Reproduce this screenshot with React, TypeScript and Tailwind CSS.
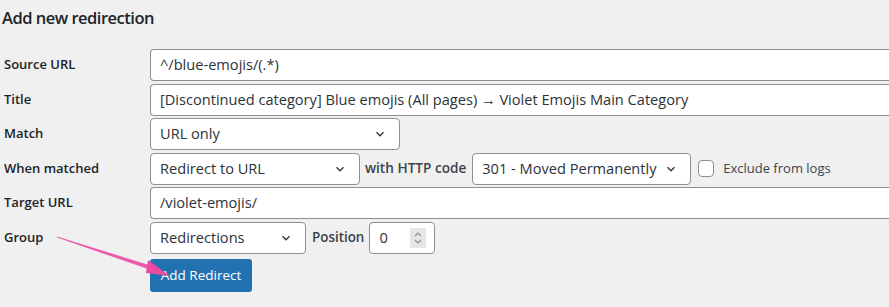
import React from "react";

const font = { fontFamily: '"Open Sans", "Noto Sans", Arial, sans-serif' };

function Chevron() {
  return (
    <svg width="14" height="14" viewBox="0 0 20 20" className="shrink-0">
      <path d="M5 7.5l5 5 5-5" fill="none" stroke="#2c3338" strokeWidth="1.8" />
    </svg>
  );
}

function Select({ value, width }: { value: string; width: string }) {
  return (
    <div
      className={`${width} h-[32px] bg-white border border-[#8c8f94] rounded-[4px] flex items-center justify-between pl-[9px] pr-[12px] text-[14.6px] text-[#2c3338]`}
    >
      <span>{value}</span>
      <Chevron />
    </div>
  );
}

function TextInput({ value }: { value: string }) {
  return (
    <div className="flex-1 h-[32px] bg-white border border-[#8c8f94] border-r-0 rounded-l-[4px] flex items-center pl-[9px] text-[14.6px] text-[#2c3338] whitespace-nowrap">
      {value}
    </div>
  );
}

function Row({ label, children }: { label: string; children: React.ReactNode }) {
  return (
    <div className="flex items-center h-[32px]">
      <div className="w-[150px] shrink-0 pl-[4px] text-[13px] font-semibold text-[#1d2327]">{label}</div>
      <div className="flex-1 flex items-center">{children}</div>
    </div>
  );
}

export default function App() {
  return (
    <div className="relative w-[889px] h-[307px] bg-[#f0f0f1] overflow-hidden" style={font}>
      <h2 className="pl-[2px] pt-[6px] text-[16.5px] tracking-[-0.5px] font-semibold text-[#1d2327] leading-[24px]">
        Add new redirection
      </h2>

      <div className="mt-[19px] flex flex-col gap-[2.5px]">
        <Row label="Source URL">
          <TextInput value="^/blue-emojis/(.*)" />
        </Row>
        <Row label="Title">
          <TextInput value="[Discontinued category] Blue emojis (All pages) → Violet Emojis Main Category" />
        </Row>
        <Row label="Match">
          <Select value="URL only" width="w-[250px]" />
        </Row>
        <Row label="When matched">
          <Select value="Redirect to URL" width="w-[210px]" />
          <span className="ml-[5px] mr-[6px] text-[13.6px] font-semibold text-[#3c434a]">with HTTP code</span>
          <Select value="301 - Moved Permanently" width="w-[219px]" />
          <div className="ml-[7px] w-[16px] h-[17px] bg-white border border-[#8c8f94] rounded-[4px]" />
          <span className="ml-[9px] text-[13px] text-[#3c434a]">Exclude from logs</span>
        </Row>
        <Row label="Target URL">
          <TextInput value="/violet-emojis/" />
        </Row>
        <Row label="Group">
          <Select value="Redirections" width="w-[156px]" />
          <span className="ml-[6px] mr-[5px] text-[13.4px] font-semibold text-[#3c434a]">Position</span>
          <div className="w-[66px] h-[32px] bg-white border border-[#8c8f94] rounded-[4px] flex items-center justify-between pl-[9px] pr-[8px] text-[14.6px] text-[#2c3338]">
            <span>0</span>
            <div className="w-[16px] h-[20px] bg-[#e6e6e6] flex items-center justify-center">
              <svg width="10" height="16" viewBox="0 0 10 16">
                <path d="M2 6l3-3 3 3M2 10l3 3 3-3" fill="none" stroke="#8c8f94" strokeWidth="1.2" />
              </svg>
            </div>
          </div>
        </Row>
      </div>

      <div className="mt-[5px] ml-[150px]">
        <button className="h-[33px] w-[102px] bg-[#2271b1] rounded-[3px] text-white text-[13.5px]">
          Add Redirect
        </button>
      </div>

      <svg className="absolute left-0 top-0 pointer-events-none" width="889" height="307">
        <path d="M57 236.5 L152 266 L151 270 L57 237.5 Z" fill="#ec5aa8" />
        <path d="M148 260 L170 276 L146 273 Z" fill="#ec4ba0" />
      </svg>
    </div>
  );
}
